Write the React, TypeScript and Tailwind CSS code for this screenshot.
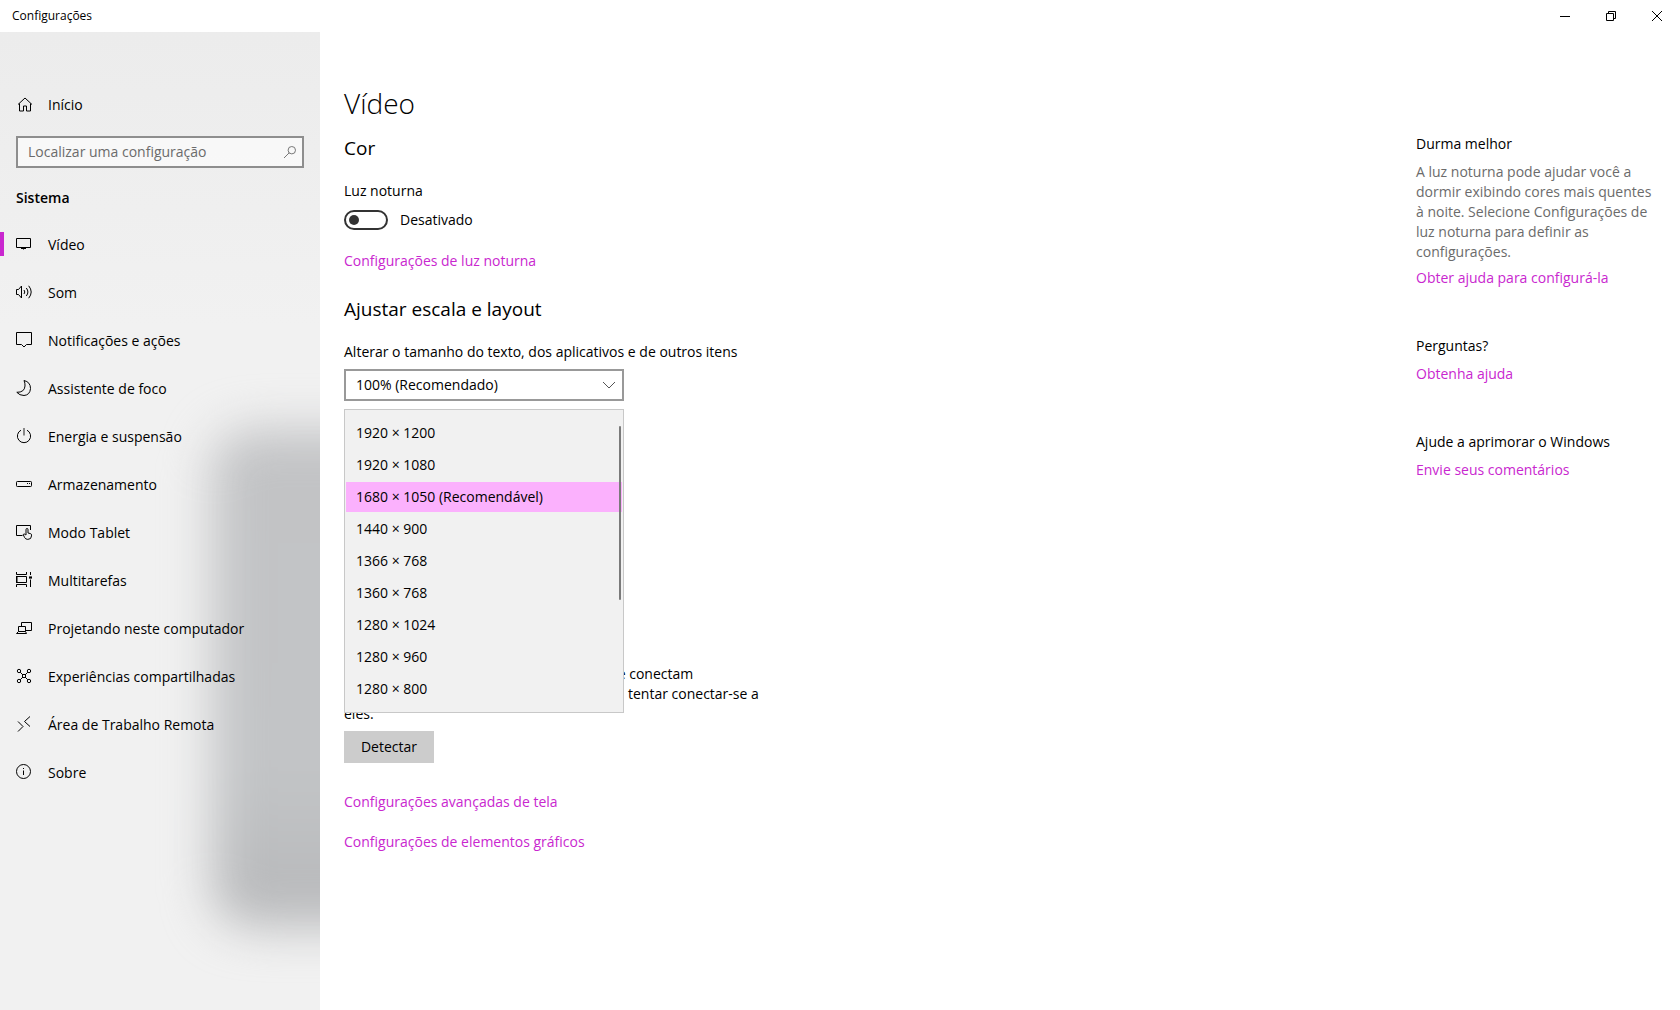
import React, { useState } from 'react';

type IconProps = { children: React.ReactNode };

function Icon({ children }: IconProps) {
  return (
    <svg
      className="h-4 w-4 shrink-0 overflow-visible"
      viewBox="0 1 16 16"
      fill="none"
      stroke="currentColor"
      strokeWidth="1"
      aria-hidden="true"
    >
      {children}
    </svg>
  );
}

const menu = [
  {
    label: 'Vídeo',
    icon: <path d="M.5 2.5h14v9H.5zM7.5 11.5v2M5 12.5h5" />,
  },
  {
    label: 'Som',
    icon: (
      <path d="M.5 5.5h2l3-3.5v12l-3-3.5h-2zM8 6q1.6 2 0 4M10.3 4q3.2 4 0 8M12.7 1.8q5 6.200 0 12.400" />
    ),
  },
  {
    label: 'Notificações e ações',
    icon: <path d="M.5.5h15v12h-5L8 15l-2.500-2.500h-5z" />,
  },
  {
    label: 'Assistente de foco',
    icon: <path d="M8 .5Q14.500 2 14.500 8.500 14 15 8 15.500 3.500 15.500.8 12.300 8.500 12.500 9 6 9.200 3 8 .5z" />,
  },
  {
    label: 'Energia e suspensão',
    icon: (
      <>
        <path d="M5 2.200a6.600 6.600 0 1 0 6 0" />
        <path d="M8 0v7.500" strokeWidth="1.600" opacity=".55" />
      </>
    ),
  },
  {
    label: 'Armazenamento',
    icon: (
      <>
        <rect x=".5" y="5.500" width="15" height="5" rx=".8" />
        <path d="M11 7.500h1M13 7.500h1" />
      </>
    ),
  },
  {
    label: 'Modo Tablet',
    icon: (
      <>
        <path d="M6.500 11.500H.5v-10h14v4.500" />
        <path d="M10 11V5.500q0-1 1-1t1 1v3.500l2.500.6q1 .3 1 1.300v1q0 3.500-3.700 3.500-2.300 0-3.300-2l-1.300-2.900q.8-1.200 2.300.2z" />
      </>
    ),
  },
  {
    label: 'Multitarefas',
    icon: (
      <>
        <path d="M.5 0v2.500h10V0M.5 15v-2.500h10V15M1 4.500h9.500v6H1zM.5 4v7M14.500 0v3M14.500 7.500V15" />
        <path d="M13 5.500h3" strokeWidth="2.200" />
      </>
    ),
  },
  {
    label: 'Projetando neste computador',
    icon: <path d="M5.500 6V2.500h10v8H10M2.500 6.500h7v5h-7zM2.500 11.500L.5 13.500h10l-1-2" />,
  },
  {
    label: 'Experiências compartilhadas',
    icon: (
      <>
        <circle cx="3" cy="3" r="1.700" />
        <circle cx="13" cy="3" r="1.700" />
        <circle cx="3" cy="13" r="1.700" />
        <circle cx="13" cy="13" r="1.700" />
        <rect x="6.500" y="6.500" width="3" height="3" />
        <path d="M4.200 4.200l2.500 2.500M11.800 4.200L9.300 6.700M4.200 11.800l2.500-2.500M11.800 11.800L9.300 9.300" />
      </>
    ),
  },
  {
    label: 'Área de Trabalho Remota',
    icon: <path d="M2 5.500l5 5-5 5M14 .5l-5.500 5 5.500 5" />,
  },
  {
    label: 'Sobre',
    icon: (
      <>
        <circle cx="7.500" cy="7.500" r="7" />
        <path d="M7.500 6.500V11M7.500 4v1" />
      </>
    ),
  },
];

const resolutions = [
  '1920 × 1200',
  '1920 × 1080',
  '1680 × 1050 (Recomendável)',
  '1440 × 900',
  '1366 × 768',
  '1360 × 768',
  '1280 × 1024',
  '1280 × 960',
  '1280 × 800',
];

function TitleBar() {
  const button = 'flex h-8 w-[46px] items-center justify-center hover:bg-gray-200';
  return (
    <header className="flex h-8 items-center justify-between bg-white pl-3">
      <span className="text-xs">Configurações</span>
      <div className="flex">
        <button type="button" aria-label="Minimizar" className={button}>
          <svg width="10" height="10" viewBox="0 0 10 10" stroke="currentColor" fill="none">
            <path d="M0 5.500h10" />
          </svg>
        </button>
        <button type="button" aria-label="Restaurar" className={button}>
          <svg width="10" height="10" viewBox="0 0 10 10" stroke="currentColor" fill="none">
            <path d="M.5 2.500h7v7h-7zM2.500 2.500v-2h7v7h-2" />
          </svg>
        </button>
        <button type="button" aria-label="Fechar" className={button}>
          <svg width="10" height="10" viewBox="0 0 10 10" stroke="currentColor" fill="none">
            <path d="M0 0l10 10M10 0L0 10" />
          </svg>
        </button>
      </div>
    </header>
  );
}

function Sidebar() {
  const [active, setActive] = useState('Vídeo');

  return (
    <aside className="relative w-80 shrink-0 overflow-hidden bg-linear-to-b from-[#ececec] via-[#f1f1f1] via-30% to-[#f1f1f1]">
      {/* Blurred window behind the acrylic panel */}
      <div className="absolute top-[398px] left-[212px] h-[496px] w-60 rounded-[40px] bg-linear-to-b from-[#c2c3c5] via-[#c2c4c6] via-70% to-[#b6b7b9] blur-[24px]" />

      <div className="relative pt-[57px]">
        <a href="#inicio" className="flex h-8 items-center gap-4 px-4">
          <Icon>
            <path d="M2 8.500L9 2l7 6.500M3.500 7.500v7.500h4v-5h3v5h4V7.500" />
          </Icon>
          Início
        </a>

        <div className="relative mx-4 mt-[15px]">
          <input
            type="text"
            aria-label="Localizar uma configuração"
            placeholder="Localizar uma configuração"
            className="block h-8 w-full border-2 border-[#8e8e8e] bg-white/60 pr-8 pb-[2px] pl-[10px] outline-none placeholder:text-[#6b6b6b]"
          />
          <svg
            className="absolute top-[10px] right-2 h-3 w-3 text-[#777]"
            viewBox="0 0 12 12"
            fill="none"
            stroke="currentColor"
            aria-hidden="true"
          >
            <circle cx="7.800" cy="4.200" r="3.700" />
            <path d="M5.200 6.800L0 12" />
          </svg>
        </div>

        <h2 className="mt-5 px-4 font-semibold">Sistema</h2>

        <nav className="mt-[13px]">
          {menu.map((item) => (
            <a
              key={item.label}
              href="#sistema"
              onClick={() => setActive(item.label)}
              className="relative flex h-12 items-center gap-4 px-4 hover:bg-black/5"
            >
              {active === item.label && (
                <span className="absolute top-[11px] left-0 h-6 w-1 bg-[#c927cf]" />
              )}
              <Icon>{item.icon}</Icon>
              {item.label}
            </a>
          ))}
        </nav>
      </div>
    </aside>
  );
}

function ResolutionMenu() {
  const [selected, setSelected] = useState(2);

  return (
    <div
      role="listbox"
      aria-label="Resolução"
      className="absolute top-2 left-0 z-10 flex h-[304px] w-[280px] flex-col gap-[2px] border border-[#c8c8c8] bg-[#f1f1f1] px-px pt-2"
    >
      {resolutions.map((resolution, i) => (
        <button
          key={resolution}
          type="button"
          role="option"
          aria-selected={i === selected}
          onClick={() => setSelected(i)}
          className={`h-[30px] shrink-0 px-[10px] text-left ${
            i === selected ? 'bg-[#fbb1fd]' : 'hover:bg-[#dedede]'
          }`}
        >
          {resolution}
        </button>
      ))}
      <span className="absolute top-4 right-[2px] h-[174px] w-[2px] rounded-full bg-[#7a7a7a]" />
    </div>
  );
}

function Content() {
  const [nightLight, setNightLight] = useState(false);
  const link = 'block w-fit text-[#c927cf] hover:text-gray-500';

  return (
    <section className="w-[430px]">
      <h1 className="text-[28px] leading-9 font-light">Vídeo</h1>

      <h2 className="mt-[13px] text-[19px] leading-7">Cor</h2>
      <p className="mt-[19px]">Luz noturna</p>
      <label className="mt-[9px] flex w-fit items-center gap-3">
        <input
          type="checkbox"
          role="switch"
          aria-label="Luz noturna"
          checked={nightLight}
          onChange={(e) => setNightLight(e.target.checked)}
          className="flex h-5 w-11 appearance-none items-center rounded-full border-2 border-[#333] px-[3px] before:h-[10px] before:w-[10px] before:rounded-full before:bg-[#333] checked:justify-end checked:border-[#c927cf] checked:bg-[#c927cf] checked:before:bg-white"
        />
        {nightLight ? 'Ativado' : 'Desativado'}
      </label>
      <a href="#luz" className={`${link} mt-[21px]`}>
        Configurações de luz noturna
      </a>

      <h2 className="mt-6 text-[19px] leading-7">Ajustar escala e layout</h2>
      <label htmlFor="scale" className="mt-[19px] block">
        Alterar o tamanho do texto, dos aplicativos e de outros itens
      </label>
      <div className="relative mt-[7px] w-[280px]">
        <select
          id="scale"
          className="block h-8 w-full appearance-none border-2 border-[#999] bg-white pl-[10px] outline-none"
        >
          <option>100% (Recomendado)</option>
          <option>125%</option>
          <option>150%</option>
        </select>
        <svg
          className="pointer-events-none absolute top-3 right-[9px] h-2 w-3 text-[#555]"
          viewBox="0 0 12 8"
          fill="none"
          stroke="currentColor"
          aria-hidden="true"
        >
          <path d="M0 1l6 6 6-6" />
        </svg>
      </div>

      <div className="relative h-[263px]">
        <ResolutionMenu />
      </div>

      <div>
        <p className="pl-[267px]">se conectam</p>
        <p className="pl-[284px]">tentar conectar-se a</p>
        <p>eles.</p>
      </div>
      <button type="button" className="mt-[7px] h-8 w-[90px] bg-[#ccc] hover:bg-[#bbb]">
        Detectar
      </button>

      <a href="#avancadas" className={`${link} mt-[29px]`}>
        Configurações avançadas de tela
      </a>
      <a href="#graficos" className={`${link} mt-5`}>
        Configurações de elementos gráficos
      </a>
    </section>
  );
}

function HelpPanel() {
  const link = 'block w-fit text-[#c927cf] hover:text-gray-500';

  return (
    <aside className="w-60 shrink-0 pt-[49px]">
      <h3>Durma melhor</h3>
      <p className="mt-2 text-[#6b6b6b]">
        A luz noturna pode ajudar você a dormir exibindo cores mais quentes à noite. Selecione
        Configurações de luz noturna para definir as configurações.
      </p>
      <a href="#ajuda" className={`${link} mt-[6px]`}>
        Obter ajuda para configurá-la
      </a>

      <h3 className="mt-12">Perguntas?</h3>
      <a href="#perguntas" className={`${link} mt-2`}>
        Obtenha ajuda
      </a>

      <h3 className="mt-12">Ajude a aprimorar o Windows</h3>
      <a href="#comentarios" className={`${link} mt-2`}>
        Envie seus comentários
      </a>
    </aside>
  );
}

export default function App() {
  return (
    <div className="flex min-h-screen flex-col bg-white font-['Open_Sans','Noto_Sans',sans-serif] text-[14px] leading-5 text-black">
      <TitleBar />
      <div className="flex grow">
        <Sidebar />
        <main className="flex grow justify-between px-6 pt-[53px]">
          <Content />
          <HelpPanel />
        </main>
      </div>
    </div>
  );
}
